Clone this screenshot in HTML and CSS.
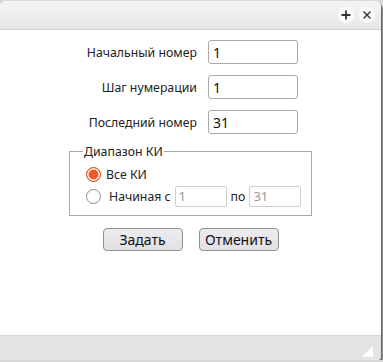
FILE: index.html
```html
<!DOCTYPE html>
<html lang="ru">
<head>
<meta charset="UTF-8" />
<title>Нумерация</title>
<link rel="stylesheet" href="styles.css">
</head>
<body>

<div class="window">
  <div class="titlebar">
    <span class="tb-btn">
      <svg width="10" height="10" viewBox="0 0 10 10"><path d="M5 0.5V9.5M0.5 5H9.5" stroke="#333" stroke-width="1.8"/></svg>
    </span>
    <span class="tb-btn">
      <svg width="8" height="8" viewBox="0 0 8 8"><path d="M0.5 0.5L7.5 7.5M7.5 0.5L0.5 7.5" stroke="#333" stroke-width="1.4"/></svg>
    </span>
  </div>

  <div class="content">
    <div class="fields">
      <label class="lbl">Начальный номер</label>
      <input class="txt" type="text" value="1">
      <label class="lbl">Шаг нумерации</label>
      <input class="txt" type="text" value="1">
      <label class="lbl">Последний номер</label>
      <input class="txt" type="text" value="31">
    </div>

    <fieldset class="range">
      <legend>Диапазон КИ</legend>
      <div class="radio-row">
        <input type="radio" name="r" checked>
        <span class="rtext">Все КИ</span>
      </div>
      <div class="radio-row">
        <input type="radio" name="r">
        <span class="rtext second">Начиная с</span>
        <input class="small" type="text" value="1" disabled>
        <span class="po">по</span>
        <input class="small" type="text" value="31" disabled>
      </div>
    </fieldset>

    <div class="buttons">
      <button>Задать</button>
      <button>Отменить</button>
    </div>
  </div>

  <div class="footer">
    <div class="grip"></div>
  </div>
</div>

</body>
</html>
```

FILE: styles.css
```css
body {
  margin: 0;
  padding-top: 1px;
  background: #d8d8d8;
  font-family: 'Noto Sans', 'Open Sans', sans-serif;
  font-size: 12.3px;
  color: #222;
}
.window {
  width: 381px;
  height: 359px;
  display: flex;
  flex-direction: column;
  background: #fff;
  border-radius: 6px 6px 4px 4px;
  box-shadow: 1px 1px 0 #6a6a6a, 2px 2px 0 #8a8a8a;
  overflow: hidden;
}
.titlebar {
  height: 28px;
  flex: none;
  display: flex;
  align-items: center;
  justify-content: flex-end;
  gap: 5px;
  padding-right: 6px;
  background: linear-gradient(#f4f4f4, #e6e6e6);
  border-bottom: 1px solid #d2d2d2;
}
.tb-btn {
  width: 16px;
  height: 16px;
  border-radius: 50%;
  background: #fbfbfb;
  display: flex;
  align-items: center;
  justify-content: center;
}
.content {
  flex: 1;
  padding-top: 10px;
}
/* поля сверху */
.fields {
  display: grid;
  grid-template-columns: 197px 90px;
  column-gap: 11px;
  row-gap: 11px;
  align-items: center;
}
.lbl {
  justify-self: end;
}
.txt {
  box-sizing: border-box;
  width: 90px;
  height: 24px;
  margin: 0;
  padding: 0 4px;
  border: 1px solid #a8a8a8;
  border-radius: 3px;
  font-family: inherit;
  font-size: 14px;
  color: #111;
}

/* Диапазон */
.range {
  box-sizing: border-box;
  width: 243px;
  margin: 9px 0 0 69px;
  padding: 3px 4px 8px 16px;
  border: 1px solid #a8a8a8;
}
.range legend {
  padding: 0 1px;
  margin-left: -3px;
}
.radio-row {
  display: flex;
  align-items: center;
  height: 22px;
  white-space: nowrap;
}
.radio-row > * {
  flex: none;
}
.radio-row input[type=radio] {
  appearance: none;
  box-sizing: border-box;
  width: 15px;
  height: 15px;
  margin: 0;
  border: 1px solid #8c8c8c;
  border-radius: 50%;
  background: #fff;
}
.radio-row input[type=radio]:checked {
  border-color: #d9501f;
  background: #ef5a26;
  box-shadow: inset 0 0 0 1.5px #fff;
}
.rtext {
  margin-left: 5px;
}
.rtext.second {
  margin-left: 8px;
  margin-right: 4px;
}
.small {
  box-sizing: border-box;
  width: 52px;
  height: 21px;
  margin: 0;
  padding: 0 3px;
  border: 1px solid #cfcfcf;
  border-radius: 2px;
  background: #fff;
  font-family: inherit;
  font-size: 13px;
  color: #999;
}
.po {
  margin: 0 4px;
}

.buttons {
  display: flex;
  justify-content: center;
  gap: 16px;
  margin-top: 12px;
}
button {
  width: 80px;
  height: 23px;
  padding: 0;
  border: 1px solid #8e8e94;
  border-radius: 4px;
  background: linear-gradient(#ececf0, #e2e2e6);
  font-family: inherit;
  font-size: 14px;
  color: #111;
}

.footer {
  box-sizing: border-box;
  height: 25px;
  flex: none;
  display: flex;
  align-items: flex-end;
  justify-content: flex-end;
  padding: 0 8px 3px 0;
  background: #e4e4e4;
  border-top: 1px solid #d6d6d6;
}
/* уголок для ресайза */
.grip {
  width: 0;
  height: 0;
  border-left: 11px solid transparent;
  border-bottom: 11px solid #fff;
}
```
